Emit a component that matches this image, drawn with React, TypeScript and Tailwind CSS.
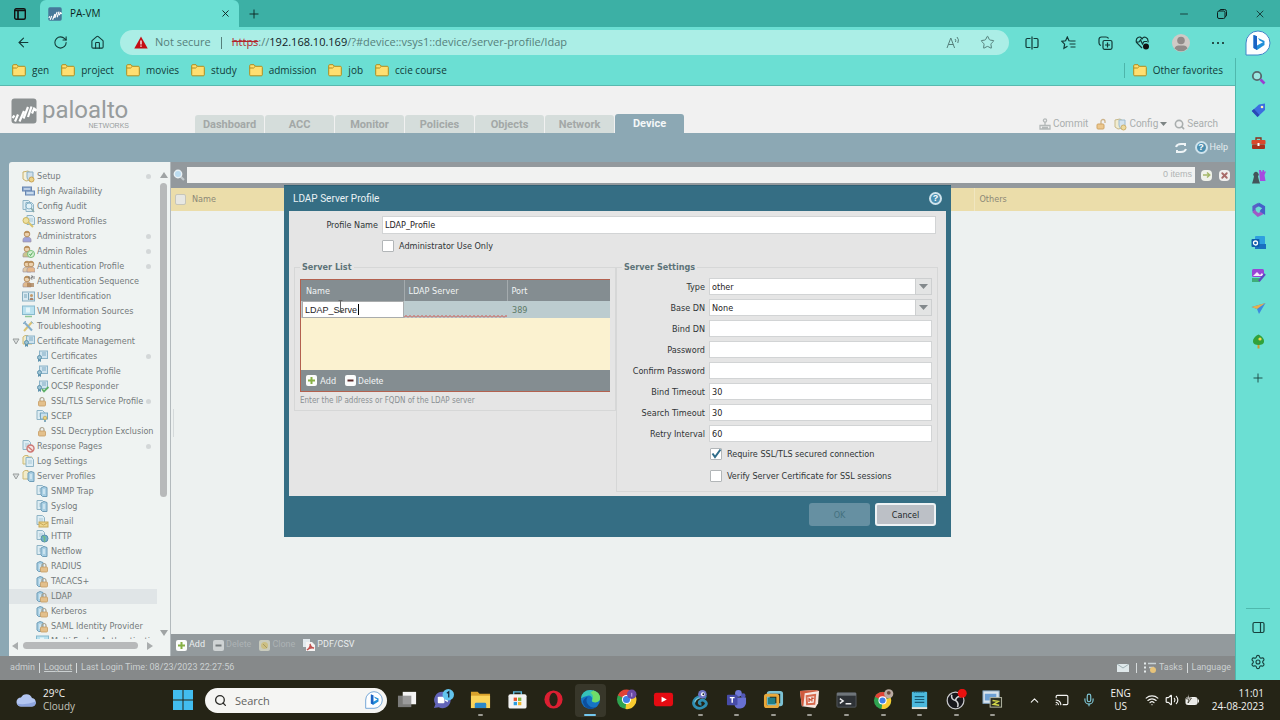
import React from 'react';
import {
  ArrowLeft,
  Columns2,
  Cast,
  ChevronUp,
  Home,
  Mic,
  Minus,
  Plus,
  RotateCw,
  Search,
  Settings,
  Star,
  Volume2,
  Wifi,
  X,
} from 'lucide-react';
import { clsx } from 'clsx';
import { twMerge } from 'tailwind-merge';

function cn(...inputs: (string | undefined | null | false)[]) {
  return twMerge(clsx(inputs));
}

const UI = "font-['Open_Sans','Noto_Sans',sans-serif]";
const NARROW = "font-['Roboto',sans-serif]";
const FORM = "font-['DejaVu_Sans_Condensed','Open_Sans',sans-serif]";

type TreeIconName =
  | 'setup'
  | 'ha'
  | 'audit'
  | 'key'
  | 'user'
  | 'role'
  | 'users'
  | 'sequence'
  | 'idcard'
  | 'vm'
  | 'tools'
  | 'certFolder'
  | 'cert'
  | 'certOk'
  | 'lock'
  | 'scep'
  | 'blocked'
  | 'logs'
  | 'serverFolder'
  | 'server'
  | 'mail'
  | 'http'
  | 'serverLock';

interface TreeItem {
  label: string;
  icon: TreeIconName;
  child?: boolean;
  open?: boolean;
  dot?: boolean;
  selected?: boolean;
}

const TREE: TreeItem[] = [
  { label: 'Setup', icon: 'setup', dot: true },
  { label: 'High Availability', icon: 'ha' },
  { label: 'Config Audit', icon: 'audit' },
  { label: 'Password Profiles', icon: 'key' },
  { label: 'Administrators', icon: 'user', dot: true },
  { label: 'Admin Roles', icon: 'role', dot: true },
  { label: 'Authentication Profile', icon: 'users', dot: true },
  { label: 'Authentication Sequence', icon: 'sequence' },
  { label: 'User Identification', icon: 'idcard' },
  { label: 'VM Information Sources', icon: 'vm' },
  { label: 'Troubleshooting', icon: 'tools' },
  { label: 'Certificate Management', icon: 'certFolder', open: true },
  { label: 'Certificates', icon: 'cert', child: true, dot: true },
  { label: 'Certificate Profile', icon: 'cert', child: true },
  { label: 'OCSP Responder', icon: 'certOk', child: true },
  { label: 'SSL/TLS Service Profile', icon: 'lock', child: true, dot: true },
  { label: 'SCEP', icon: 'scep', child: true },
  { label: 'SSL Decryption Exclusion', icon: 'lock', child: true },
  { label: 'Response Pages', icon: 'blocked', dot: true },
  { label: 'Log Settings', icon: 'logs' },
  { label: 'Server Profiles', icon: 'serverFolder', open: true },
  { label: 'SNMP Trap', icon: 'server', child: true },
  { label: 'Syslog', icon: 'server', child: true },
  { label: 'Email', icon: 'mail', child: true },
  { label: 'HTTP', icon: 'http', child: true },
  { label: 'Netflow', icon: 'server', child: true },
  { label: 'RADIUS', icon: 'serverLock', child: true },
  { label: 'TACACS+', icon: 'serverLock', child: true },
  { label: 'LDAP', icon: 'serverLock', child: true, selected: true },
  { label: 'Kerberos', icon: 'serverLock', child: true },
  { label: 'SAML Identity Provider', icon: 'serverLock', child: true },
  { label: 'Multi Factor Authentication', icon: 'vm', child: true },
];

const Page = ({ x = 0, y = 0 }: { x?: number; y?: number }) => (
  <g transform={`translate(${x} ${y})`}>
    <path d="M1 .5h5.500l2 2v7h-7.500z" fill="#dcecf3" stroke="#8fb4c6" />
    <path d="M3 4h4M3 6h4" stroke="#a9c8d6" />
  </g>
);
const Folder = () => <path d="M1 9V2l2-1.500h3V2h4v7z" fill="#f2ecc9" stroke="#cdb977" />;
const Rack = ({ x = 0 }: { x?: number }) => (
  <g transform={`translate(${x} 0)`}>
    <path d="M1 3l3-1.500 3 1v9H2.500L1 10z" fill="#a9cfe3" stroke="#6e9db8" />
    <path d="M4 4v5" stroke="#eef7fb" />
  </g>
);
const Padlock = ({ x = 0, y = 0 }: { x?: number; y?: number }) => (
  <g transform={`translate(${x} ${y})`}>
    <path d="M2 4V2.500a2 2 0 0 1 4 0V4" fill="none" stroke="#aaa18d" strokeWidth="1.200" />
    <rect x="0.500" y="4" width="7" height="5" rx="1" fill="#e3c08c" stroke="#c79c62" strokeWidth=".8" />
  </g>
);
const Person = ({ x = 0, body = '#9fa3da' }: { x?: number; body?: string }) => (
  <g transform={`translate(${x} 0)`}>
    <path d="M1 12c-.5-4 1-5 4-5s4.500 1 4 5z" fill={body} stroke="#9a8f9c" strokeWidth=".6" />
    <circle cx="5" cy="4" r="2.800" fill="#ecd1ad" stroke="#b99161" />
    <path d="M2.500 3.500C3 .5 7 .5 7.500 3.500 6 2.500 4 2.500 2.500 3.500z" fill="#b58a55" />
  </g>
);
const Ribbon = ({ x = 0 }: { x?: number }) => (
  <g transform={`translate(${x} 0)`}>
    <rect x="3.500" y="1" width="8" height="7.500" fill="#cfe3ee" stroke="#8bb3c8" />
    <path d="M6 3h4M6 5h4" stroke="#7fabc3" />
    <path d="M2 8v4l1.500-1L5 12V8z" fill="#5f93ad" />
    <circle cx="3.500" cy="7.500" r="2" fill="#9cc3d4" stroke="#5f93ad" />
  </g>
);

function TreeIcon({ name }: { name: TreeIconName }) {
  const art: Record<TreeIconName, React.ReactNode> = {
    setup: (
      <>
        <path d="M1 2l5-1 3 2v7l-5 1-3-2z" fill="#f4f1dc" stroke="#c7b06b" />
        <path d="M5 2h6v5c0 3-3 4-3 4s-3-1-3-4z" fill="#cfe0ec" stroke="#8aaec4" />
        <circle cx="9.500" cy="9.500" r="2.500" fill="#ecd387" stroke="#c9a354" />
      </>
    ),
    ha: (
      <>
        <rect x="0.500" y="2" width="9" height="4" fill="#8fabd0" stroke="#6886b1" />
        <rect x="3.500" y="6" width="9" height="4" fill="#a9c4e0" stroke="#6886b1" />
        <path d="M2 4h6M5 8h6" stroke="#e7f0f8" />
      </>
    ),
    audit: (
      <>
        <Page />
        <Page x={3} y={2} />
        <circle cx="7" cy="6" r="3" fill="#e3f2f8" stroke="#88b5cb" />
        <path d="M9 8l3 4" stroke="#8aa" strokeWidth="1.500" />
      </>
    ),
    key: (
      <>
        <Page x={4} />
        <circle cx="4" cy="5.500" r="3" fill="#eee0a0" stroke="#ccb65e" />
        <path d="M6 7l5 5" stroke="#d8c46f" strokeWidth="2" />
      </>
    ),
    user: <Person />,
    role: (
      <>
        <Person body="#c9c48e" />
        <circle cx="9" cy="9" r="3.500" fill="#d5f0d3" stroke="#76bf7a" />
        <path d="M7.500 9l1 1.500 2-3" fill="none" stroke="#4fa557" />
      </>
    ),
    users: (
      <>
        <Person body="#e0caa8" />
        <Person x={4} body="#e6b98c" />
      </>
    ),
    sequence: (
      <>
        <Person body="#e0b98c" />
        <path d="M5 9h7M5 11h7" stroke="#a98055" strokeWidth="1.500" />
        <path d="M7 1v3M9 1h1.500v1.500H9V4h1.500M12 1v3" fill="none" stroke="#777" strokeWidth=".9" />
      </>
    ),
    idcard: (
      <>
        <rect x="0.500" y="2" width="12" height="9" fill="#d8e9f1" stroke="#88aec0" />
        <path d="M2 5h3M2 7h3M6.500 3v7" stroke="#79a5ba" />
        <circle cx="9.500" cy="5.500" r="1.500" fill="#c49a6a" />
        <path d="M7.500 10c0-3 4-3 4 0z" fill="#a8826a" />
      </>
    ),
    vm: (
      <>
        <rect x="0.500" y="1" width="12" height="8.500" fill="#b9e1ef" stroke="#87b9cd" />
        <rect x="4" y="2.500" width="4" height="5" fill="#e4f5fa" />
        <path d="M3 11.500h7" stroke="#8fc796" strokeWidth="1.500" />
      </>
    ),
    tools: (
      <>
        <path d="M2 11l8-9" stroke="#dcc475" strokeWidth="2" />
        <path d="M2 2l8 8.500" stroke="#86aeca" strokeWidth="2" />
        <path d="M9 1.500l2.500 2M1 4l3-3" stroke="#86aeca" />
      </>
    ),
    certFolder: (
      <>
        <Folder />
        <Ribbon x={1} />
      </>
    ),
    cert: <Ribbon />,
    certOk: (
      <>
        <Ribbon />
        <path d="M6 9l2 2.500L12.500 7" fill="none" stroke="#5fb067" strokeWidth="1.800" />
      </>
    ),
    lock: (
      <g transform="translate(2 2)">
        <Padlock />
      </g>
    ),
    scep: (
      <>
        <Page />
        <rect x="4.500" y="3" width="7" height="6" fill="#c9e1ee" stroke="#79a9c1" />
        <circle cx="9" cy="8" r="1.800" fill="#e8d382" stroke="#bfa350" strokeWidth=".7" />
        <path d="M9 10v2" stroke="#5f93ad" strokeWidth="1.500" />
      </>
    ),
    blocked: (
      <>
        <Page />
        <circle cx="8.500" cy="8.500" r="3.500" fill="#f3e4e2" stroke="#cf7773" strokeWidth="1.400" />
        <path d="M6 6.500l5 4.500" stroke="#cf7773" strokeWidth="1.300" />
      </>
    ),
    logs: (
      <>
        <Folder />
        <Page x={3} y={2} />
      </>
    ),
    serverFolder: (
      <>
        <Folder />
        <Rack x={5} />
      </>
    ),
    server: (
      <>
        <Page />
        <Rack x={4} />
      </>
    ),
    mail: (
      <>
        <Page />
        <rect x="3" y="7" width="9" height="5" fill="#ecd58d" stroke="#caa957" />
        <path d="M3 7.500l4.500 2.500L12 7.500" fill="none" stroke="#caa957" />
      </>
    ),
    http: (
      <>
        <Page />
        <circle cx="8.500" cy="8.500" r="3.500" fill="#74aec9" stroke="#5690ac" />
        <path d="M6.500 7c2-1 3 1 2 2s1 2 0 2.500" fill="none" stroke="#6fbf7d" strokeWidth="1.300" />
      </>
    ),
    serverLock: (
      <>
        <Rack />
        <Padlock x={4} y={3} />
      </>
    ),
  };
  return (
    <svg viewBox="0 0 13 13" className="size-[13px] shrink-0" aria-hidden>
      {art[name]}
    </svg>
  );
}

function FavFolder() {
  return (
    <svg viewBox="0 0 14 13" className="h-[13px] w-[14px] shrink-0" aria-hidden>
      <path d="M.7 3V1.700q0-1 1-1H5l1.300 1.600h6q1 0 1 1v7.500q0 1-1 1h-10.600q-1 0-1-1z" fill="#ffdf70" stroke="#b18d1f" />
      <path d="M.7 4h3.800L6.300 2.300" fill="none" stroke="#b18d1f" />
    </svg>
  );
}

function PaloMark({ className, bg }: { className: string; bg: string }) {
  return (
    <svg viewBox="0 0 26 26" className={className} aria-hidden>
      <rect x="0.500" y="0.500" width="25" height="25" rx="3" fill={bg} />
      <path d="M1.500 20l2-2.500M4 23.500l3-7M8.500 23.500l4.500-10.500M12.500 20.500l4.500-11.500M17 19l3.500-10.500M21 15.500l2.500-6M24 13l1.500-2" stroke="#fff" strokeWidth="2.200" />
    </svg>
  );
}

function BingMark({ className }: { className: string }) {
  return (
    <svg viewBox="0 0 26 26" className={className} aria-hidden>
      <path d="M13 1a12 12 0 1 1 0 24H1V13A12 12 0 0 1 13 1z" fill="#fdfeff" stroke="#3f86c9" />
      <path d="M8.500 5l3.500 1.300v9.200l6-3.300-3.500-1.600L13 8l6.500 3v4L12 20l-3.500-2z" fill="#208fd9" />
      <path d="M8.500 5l3.500 1.300V20l-3.500-2z" fill="#1b62c4" />
    </svg>
  );
}

function BrowserTitle() {
  return (
    <div className="flex h-[27px] shrink-0 bg-[#3cb0a5] text-[#0c1f1d]">
      <div className="flex w-10 items-center justify-center">
        <svg viewBox="0 0 12 12" className="size-3" aria-hidden>
          <rect x="0.700" y="0.700" width="10.600" height="10.600" rx="1.500" fill="none" stroke="#111" strokeWidth="1.400" />
          <path d="M1 2.500h10M4 2v9" stroke="#111" strokeWidth="1.600" />
        </svg>
      </div>
      <div className="flex w-[199px] items-center rounded-t-md bg-[#6bdfd3] pl-2">
        <PaloMark className="size-[14px]" bg="#46799a" />
        <span className="flex-1 pl-2 text-[10px]">PA-VM</span>
        <button aria-label="Close tab" className="mr-2">
          <X className="size-[11px]" strokeWidth={2} />
        </button>
      </div>
      <button aria-label="New tab" className="px-2">
        <Plus className="size-[14px]" strokeWidth={1.5} />
      </button>
      <div className="ml-auto flex items-center gap-[27px] pr-[14px]">
        <button aria-label="Minimize">
          <Minus className="size-3" strokeWidth={1.5} />
        </button>
        <button aria-label="Restore">
          <svg viewBox="0 0 10 10" className="size-[10px]" fill="none" stroke="currentColor" aria-hidden>
            <rect x="0.500" y="2" width="7.500" height="7.500" rx="1.500" />
            <path d="M2.500 2q0-1.500 1.500-1.500h3.500q2 0 2 2V6q0 1.500-1.500 1.500" />
          </svg>
        </button>
        <button aria-label="Close">
          <X className="size-3" strokeWidth={1.5} />
        </button>
      </div>
    </div>
  );
}

function Toolbar() {
  return (
    <div className="flex h-[31px] shrink-0 items-center text-[#123a37]">
      <div className="flex w-[120px] items-center gap-[22px] pl-4">
        <button aria-label="Back">
          <ArrowLeft className="size-[15px]" strokeWidth={1.7} />
        </button>
        <button aria-label="Refresh">
          <RotateCw className="size-[15px]" strokeWidth={1.7} />
        </button>
        <button aria-label="Home">
          <Home className="size-[15px]" strokeWidth={1.7} />
        </button>
      </div>
      <div className="flex h-[25px] flex-1 items-center rounded-full bg-[#abeee6] pl-[14px] pr-[14px] text-[11px] text-[#55807b]">
        <svg viewBox="0 0 14 13" className="h-[13px] w-[14px]" aria-hidden>
          <path d="M7 .5L13.700 12.500H.3z" fill="#c40d14" />
          <path d="M7 4.500v4M7 9.500v1.300" stroke="#fff" strokeWidth="1.300" />
        </svg>
        <span className="pl-[7px]">Not secure</span>
        <span className="mx-[10px] h-3 w-px bg-[#55807b]" />
        <div role="textbox" aria-label="Address" className="flex-1 whitespace-nowrap">
          <span className="text-[#b3262c] line-through">https</span>://
          <span className="text-[#10201f]">192.168.10.169</span>
          /?#device::vsys1::device/server-profile/ldap
        </div>
        <button aria-label="Read aloud" className="mr-5">
          <svg viewBox="0 0 14 13" className="h-[13px] w-[14px]" fill="none" stroke="currentColor" aria-hidden>
            <path d="M1 12L4.800 2 8.600 12M2.300 8.500h5M9 3q1.300 1 .5 3M11 1q2.500 2.500.8 6" />
          </svg>
        </button>
        <button aria-label="Add to favorites">
          <Star className="size-[15px]" strokeWidth={1.6} />
        </button>
      </div>
      <div className="flex items-center gap-[22px] pl-4 pr-[11px]">
        <button aria-label="Split screen">
          <svg viewBox="0 0 14 14" className="size-[14px]" fill="none" stroke="currentColor" strokeWidth="1.200" aria-hidden>
            <path d="M5.500 11.500H2.300Q1 11.500 1 10.200V3.800Q1 2.500 2.300 2.500h3.200M8.500 2.500h3.200q1.300 0 1.300 1.300v6.400q0 1.300-1.300 1.300H8.500M7 .5v13" />
          </svg>
        </button>
        <button aria-label="Favorites">
          <svg viewBox="0 0 15 14" className="h-[14px] w-[15px]" fill="none" stroke="currentColor" strokeWidth="1.200" aria-hidden>
            <path d="M10 5L8 4.800 6.300 1 4.600 4.800.8 5.300l2.800 2.800-.7 4.200 3.600-2M9.500 5h5M8.500 8h6M9.500 11h5" />
          </svg>
        </button>
        <button aria-label="Collections">
          <svg viewBox="0 0 15 14" className="h-[14px] w-[15px]" fill="none" stroke="currentColor" strokeWidth="1.200" aria-hidden>
            <rect x="5" y="4.500" width="9" height="8.800" rx="1.500" />
            <path d="M9.500 6.500v5M7 9h5M3 9.500Q1 9 1 7V3.500Q1 1 3.500 1H8q2 0 2.500 1.500" />
          </svg>
        </button>
        <button aria-label="Browser essentials">
          <svg viewBox="0 0 15 14" className="h-[14px] w-[15px]" fill="none" stroke="currentColor" strokeWidth="1.200" aria-hidden>
            <path d="M7 12L1.500 6.500Q.5 3 3 1.500T7 3q1.500-2.500 4-1.500T13 6.500M1 6h3l1.500-2 2 4L9 5.500h3" />
            <circle cx="11" cy="10.500" r="3" fill="#111" stroke="none" />
          </svg>
        </button>
        <button aria-label="Profile">
          <svg viewBox="0 0 18 18" className="size-[18px]" aria-hidden>
            <circle cx="9" cy="9" r="9" fill="#cfcac6" />
            <circle cx="9" cy="6.500" r="3.800" fill="#918b89" />
            <path d="M2.500 14.500q1-3 4-3h5q3 0 4 3A9 9 0 0 1 2.500 14.500z" fill="#918b89" />
          </svg>
        </button>
        <button aria-label="More" className="flex gap-[3px]">
          <span className="size-[2px] rounded-full bg-[#0c1f1d]" />
          <span className="size-[2px] rounded-full bg-[#0c1f1d]" />
          <span className="size-[2px] rounded-full bg-[#0c1f1d]" />
        </button>
      </div>
    </div>
  );
}

function Favorites() {
  return (
    <nav className="flex h-7 shrink-0 items-center gap-3 border-b border-[#59b9af] px-3 pb-[2px] text-[10px] text-[#123a37]">
      {['gen', 'project', 'movies', 'study', 'admission', 'job', 'ccie course'].map((name) => (
        <a key={name} href="#" className="flex items-center gap-[6px]">
          <FavFolder />
          {name}
        </a>
      ))}
      <a href="#" className="ml-auto flex items-center gap-[6px] border-l border-[#4db5aa] pl-2">
        <FavFolder />
        Other favorites
      </a>
    </nav>
  );
}

function EdgeSidebar() {
  return (
    <aside className="flex w-[45px] shrink-0 flex-col items-center bg-[#6bdfd3] pt-[3px] text-[#17413d]">
      <BingMark className="size-[26px]" />
      <div className="mt-[2px] flex w-full flex-1 flex-col items-center border-l border-[#4fb8ad] pt-3">
        <div className="flex flex-col items-center gap-[18px]">
          <svg viewBox="0 0 15 15" className="size-[15px]" aria-hidden>
            <circle cx="6" cy="6" r="4.200" fill="#9ce8e2" stroke="#55696d" strokeWidth="1.800" />
            <path d="M9.500 9.500l4 4" stroke="#9a3fd1" strokeWidth="2.600" />
          </svg>
          <svg viewBox="0 0 15 15" className="size-[15px]" aria-hidden>
            <path d="M8 1.500l6-1V7L6.500 14 .8 8z" fill="#3c6ee0" />
            <path d="M.8 8l5.700 6 2-2L3 6z" fill="#2949b5" />
            <circle cx="11" cy="4" r="1.300" fill="#fff3b0" />
          </svg>
          <svg viewBox="0 0 15 15" className="size-[15px]" aria-hidden>
            <path d="M5 4V2h5v2" fill="none" stroke="#8d2b18" strokeWidth="1.300" />
            <rect x="0.500" y="4" width="14" height="4.500" rx="1" fill="#d8492c" />
            <rect x="1" y="8.500" width="13" height="4.500" rx="1" fill="#a8321c" />
            <rect x="6.500" y="7" width="2" height="3" fill="#fff" />
          </svg>
          <svg viewBox="0 0 15 15" className="size-[15px]" aria-hidden>
            <path d="M8 1h2v1.500h1.500V1H13v1.500h2L13.500 6l1 6H9z" fill="#a64be0" />
            <path d="M1 14.500l1-3 1-4a2.700 2.700 0 1 1 4 0l1 4 1 3z" fill="#43545a" />
          </svg>
          <svg viewBox="0 0 15 15" className="size-[15px]" fill="none" strokeWidth="3.200" aria-hidden>
            <path d="M7.500 2.500L3 5v4.500" stroke="#5a5fc6" />
            <path d="M2.500 9l4.500 4 5-2.500" stroke="#a05ac6" />
            <path d="M7 2l5.500 3.200V10L9.500 8" stroke="#4560c9" />
          </svg>
          <svg viewBox="0 0 15 15" className="size-[15px]" aria-hidden>
            <rect x="4" y="1" width="10" height="13" rx="1" fill="#2f9fdf" />
            <path d="M4 9h11v5H4z" fill="#1a6fc0" />
            <rect x="0.500" y="4" width="8" height="8" rx="1" fill="#0d5cab" />
            <circle cx="4.500" cy="8" r="2" fill="none" stroke="#fff" strokeWidth="1.300" />
          </svg>
          <svg viewBox="0 0 15 15" className="size-[15px]" aria-hidden>
            <rect x="1" y="1" width="12" height="8" rx="1.500" fill="#9a45d6" />
            <path d="M2 8l4-4 3 3 2-2 2 3z" fill="#f6eafc" />
            <path d="M1 10h8v4H1z" fill="#3fae79" />
            <path d="M8 13l6-7" stroke="#5d46c4" strokeWidth="2.200" />
          </svg>
          <svg viewBox="0 0 15 15" className="size-[15px]" aria-hidden>
            <path d="M.5 6L14.500 2 8 13 6 8z" fill="#3c8be0" />
            <path d="M.5 6L14.500 2 6 8z" fill="#e6b04c" />
          </svg>
          <svg viewBox="0 0 15 15" className="size-[15px]" aria-hidden>
            <path d="M6.500 10h2v4.500h-2z" fill="#d29b2b" />
            <path d="M7.500 .5q6 3 5.500 7.500-.5 3-5.500 3T2 8Q1.500 3.500 7.500.5z" fill="#31a23a" />
            <circle cx="9" cy="5" r="1.600" fill="#f3d64d" />
          </svg>
          <button aria-label="Customize" className="mt-1">
            <Plus className="size-[14px]" strokeWidth={1.5} />
          </button>
        </div>
        <div className="mt-auto flex flex-col items-center gap-5 border-t border-[#4fb8ad] px-1 pb-[10px] pt-3">
          <svg viewBox="0 0 13 13" className="size-[13px]" fill="none" stroke="currentColor" strokeWidth="1.200" aria-hidden>
            <rect x="1" y="1.500" width="11" height="10" rx="1.500" />
            <path d="M8.500 2v9" />
          </svg>
          <button aria-label="Settings">
            <Settings className="size-[16px]" strokeWidth={1.7} />
          </button>
        </div>
      </div>
    </aside>
  );
}

const TABS = ['Dashboard', 'ACC', 'Monitor', 'Policies', 'Objects', 'Network', 'Device'];

function AppHeader() {
  return (
    <header className="flex h-[47px] shrink-0 bg-[#f1f1f1]">
      <div className="flex w-[195px] pl-[11px] pt-3">
        <PaloMark className="size-[26px]" bg="#8b9091" />
        <div className="w-[92px] pl-[5px] text-[#979c9d]">
          <div className="font-['Roboto',sans-serif] text-[24px] leading-[24px]">paloalto</div>
          <div className="text-right font-['Liberation_Sans',sans-serif] text-[7px] leading-[7px]">NETWORKS</div>
        </div>
      </div>
      <div className={cn('flex items-end gap-px text-[11px] font-bold leading-5', NARROW)}>
        {TABS.map((tab) => (
          <button
            key={tab}
            className={cn(
              'h-[18px] w-[69px] rounded-t-[3px] text-center',
              tab === 'Device' ? 'h-[19px] bg-[#8ca8b4] text-[#f4f7f8]' : 'bg-[#d5dddb] text-[#a3a8a7]'
            )}
          >
            {tab}
          </button>
        ))}
      </div>
      <div className={cn('ml-auto flex items-end gap-[7px] pb-px pr-[17px] text-[10px] leading-4 text-[#a9aeae]', NARROW)}>
        <button className="flex items-center gap-[2px]">
          <svg viewBox="0 0 12 12" className="size-3" fill="none" stroke="#b4b9b9" strokeWidth="1.300" aria-hidden>
            <circle cx="6" cy="2.500" r="1.600" />
            <path d="M6 4v3M1 7.500h10v3.500H1zM3 9.500h6" />
          </svg>
          Commit
        </button>
        <svg viewBox="0 0 12 12" className="mb-[2px] size-3" aria-hidden>
          <path d="M6 6V3.500a2 2 0 0 1 4 0V5" fill="none" stroke="#cdb48c" strokeWidth="1.300" />
          <rect x="2" y="6" width="7" height="5" rx="1" fill="#ecc78d" stroke="#d0a566" />
        </svg>
        <button className="flex items-center gap-[2px]">
          <svg viewBox="0 0 13 13" className="size-[13px]" aria-hidden>
            <path d="M1 2l5-1 3 2v7l-5 1-3-2z" fill="#f1ecd0" stroke="#c7b98a" />
            <path d="M5 2h6v5c0 3-3 4-3 4s-3-1-3-4z" fill="#d3e3ee" stroke="#9bbacd" />
            <circle cx="9.500" cy="9.500" r="2.500" fill="#ecd99c" stroke="#cdb06b" />
          </svg>
          Config
          <svg viewBox="0 0 7 4" className="h-1 w-[7px]" aria-hidden>
            <path d="M0 0h7L3.500 4z" fill="#7d8484" />
          </svg>
        </button>
        <button className="flex items-center gap-[2px]">
          <Search className="size-[11px]" strokeWidth={3.5} />
          Search
        </button>
      </div>
    </header>
  );
}

function TreePanel() {
  return (
    <aside className="flex w-[161px] shrink-0 flex-col rounded-tl-[3px] bg-[#eff3f2]">
      <div className="flex min-h-0 flex-1">
        <ul className={cn('mt-[7px] min-h-0 w-[148px] overflow-hidden text-[9px] leading-[15px] text-[#747a7b]', FORM)}>
          {TREE.map((item) => (
            <li key={item.label} className={cn('flex h-[15px] items-center', item.selected && 'bg-[#e0e5e7]')}>
              <span className={cn('flex shrink-0 items-center pl-[3px]', item.child ? 'w-[27px]' : 'w-[13px]')}>
                {item.open && (
                  <svg viewBox="0 0 8 7" className="h-[7px] w-2" aria-hidden>
                    <path d="M1 1h6L4 6z" fill="#d9dddd" stroke="#9a9f9f" />
                  </svg>
                )}
              </span>
              <TreeIcon name={item.icon} />
              <a href="#" className="min-w-0 flex-1 overflow-hidden whitespace-nowrap pl-[2px]">
                {item.label}
              </a>
              {item.dot && <span className="ml-px mr-[6px] size-[5px] shrink-0 rounded-full bg-[#d3d7d8]" />}
            </li>
          ))}
        </ul>
        <div className="flex w-[13px] flex-col items-center gap-[5px] pb-[3px] pt-[10px]">
          <svg viewBox="0 0 8 6" className="h-[6px] w-2" aria-hidden>
            <path d="M4 0l4 6H0z" fill="#9fa3a4" />
          </svg>
          <div className="flex w-[7px] flex-1 flex-col">
            <div className="h-[71%] rounded-full bg-[#b7b9ba]" />
          </div>
          <svg viewBox="0 0 8 6" className="h-[6px] w-2" aria-hidden>
            <path d="M4 6l4-6H0z" fill="#9fa3a4" />
          </svg>
        </div>
      </div>
      <div className="flex h-[17px] items-center gap-[5px] pb-1 pl-[3px]">
        <svg viewBox="0 0 6 8" className="h-2 w-[6px]" aria-hidden>
          <path d="M0 4l6-4v8z" fill="#a9adae" />
        </svg>
        <div className="h-[7px] w-[115px] rounded-full bg-[#b7b9ba]" />
        <svg viewBox="0 0 6 8" className="ml-1 h-2 w-[6px]" aria-hidden>
          <path d="M6 4L0 0v8z" fill="#a9adae" />
        </svg>
      </div>
    </aside>
  );
}

function PlusBadge({ minus, faded }: { minus?: boolean; faded?: boolean }) {
  return (
    <svg viewBox="0 0 11 11" className="size-[11px] shrink-0" aria-hidden>
      <rect width="11" height="11" rx="2" fill={faded ? '#cfd3d4' : '#fbfcfb'} />
      {minus ? (
        <path d="M2.500 5.500h6" stroke={faded ? '#747a7d' : '#5a2a2a'} strokeWidth="2" />
      ) : (
        <path d="M2 5.500h7M5.500 2v7" stroke="#86b045" strokeWidth="2" />
      )}
    </svg>
  );
}

function MainPane() {
  return (
    <main className="flex min-w-0 flex-1 flex-col border-l border-[#b3babd] bg-[#edf1f0]">
      <div className="flex h-[26px] shrink-0 items-center bg-[#93999d] pl-[2px] pr-1">
        <svg viewBox="0 0 12 12" className="size-3" aria-hidden>
          <path d="M7.500 7.500l3.500 3.500" stroke="#c3cacd" strokeWidth="2.200" />
          <circle cx="5" cy="5" r="3.700" fill="#bcdcf0" stroke="#e9f1f5" strokeWidth="1.400" />
        </svg>
        <div className="ml-[2px] flex h-4 flex-1 items-center bg-[#f1f2f1] pr-[3px] font-['Liberation_Sans',sans-serif] text-[9px] text-[#b0b4b4]">
          <input aria-label="Filter" className="h-full min-w-0 flex-1 bg-transparent outline-none" />
          0 items
        </div>
        <button aria-label="Apply filter" className="ml-[6px] flex size-[11px] items-center justify-center rounded-sm bg-[#f0f2ea]">
          <svg viewBox="0 0 8 8" className="size-2" fill="none" stroke="#a5b868" strokeWidth="1.400" aria-hidden>
            <path d="M0 4h6M4 1.500L6.800 4 4 6.500" />
          </svg>
        </button>
        <button aria-label="Clear filter" className="ml-[7px] mr-px flex size-[11px] items-center justify-center rounded-sm bg-[#f0efee]">
          <X className="size-[9px] text-[#a96b69]" strokeWidth={5} />
        </button>
      </div>
      <table className={cn('w-full table-fixed bg-[#ebddaa] text-left text-[9px] text-[#8c8877]', FORM)}>
        <thead>
          <tr className="h-[23px]">
            <th className="w-[803px] border-r border-[#f0e6c0] p-0 font-normal">
              <label className="flex items-center gap-[6px] pl-1">
                <input type="checkbox" className="size-[11px] appearance-none rounded-[2px] border border-[#c6c5b9] bg-[#e7e7e2]" />
                Name
              </label>
            </th>
            <th className="p-0 pl-[5px] font-normal">Others</th>
          </tr>
        </thead>
      </table>
      <div className="flex flex-1 items-center">
        <span className="h-7 w-[3px] border-r border-[#d5dadb]" />
      </div>
      <div className={cn('flex h-[22px] shrink-0 items-center gap-2 bg-[#939a9d] pl-[5px] text-[9px] text-[#e9edee]', NARROW)}>
        <button className="flex items-center gap-[2px]">
          <PlusBadge />
          Add
        </button>
        <button disabled className="flex items-center gap-[2px] text-[#adb3b5]">
          <PlusBadge minus faded />
          Delete
        </button>
        <button disabled className="flex items-center gap-[2px] text-[#adb3b5]">
          <svg viewBox="0 0 11 11" className="size-[11px]" aria-hidden>
            <rect width="11" height="11" rx="2" fill="#c9cbbd" />
            <circle cx="5.500" cy="5.500" r="3.500" fill="#ccbf83" />
            <path d="M4 4l4 4" stroke="#a79a62" />
          </svg>
          Clone
        </button>
        <button className="flex items-center gap-[2px]">
          <svg viewBox="0 0 12 12" className="size-3" aria-hidden>
            <path d="M0 0h7v8H0z" fill="#e3eaee" />
            <path d="M3 3h6l3 3v6H3z" fill="#f5f3f3" />
            <path d="M4 11q4-3 3-6 1 4 4 4-4-1-7 2z" fill="none" stroke="#c2514f" strokeWidth="1.300" />
          </svg>
          PDF/CSV
        </button>
      </div>
    </main>
  );
}

function AppFooter() {
  return (
    <footer className={cn('flex h-6 shrink-0 items-center bg-[#86898a] pl-[10px] pr-1 text-[9px] text-[#cbd0d1]', NARROW)}>
      <span>admin</span>
      <span className="mx-1 h-[10px] w-px bg-[#d5d9da]" />
      <a href="#" className="underline">
        Logout
      </a>
      <span className="mx-1 h-[10px] w-px bg-[#d5d9da]" />
      <span>Last Login Time: 08/23/2023 22:27:56</span>
      <svg viewBox="0 0 12 8" className="ml-auto h-2 w-3" aria-hidden>
        <path d="M0 0h12v8H0z" fill="#dfe8ea" />
        <path d="M0 0l6 4 6-4" fill="none" stroke="#9fb0b3" />
      </svg>
      <span className="mx-[7px] h-[10px] w-px bg-[#d5d9da]" />
      <svg viewBox="0 0 13 12" className="h-3 w-[13px]" aria-hidden>
        <path d="M0 1.500h3M0 5.500h3M0 9.500h3" stroke="#e3e9ea" strokeWidth="2" strokeDasharray="2 1" />
        <path d="M4 1.500h8M5 5.500h5" stroke="#c9d3d6" strokeWidth="1.500" />
        <circle cx="9" cy="8" r="3" fill="#e6c37a" />
      </svg>
      <a href="#" className="pl-[2px]">
        Tasks
      </a>
      <span className="mx-1 h-[10px] w-px bg-[#d5d9da]" />
      <a href="#">Language</a>
    </footer>
  );
}

const fieldBox = 'h-[17px] w-full min-w-0 border border-[#d2d4d5] bg-white px-[2px] text-[#1f2325] outline-none';

function CheckField({ id, label, checked }: { id: string; label: string; checked?: boolean }) {
  return (
    <label htmlFor={id} className="flex h-[22px] items-center gap-[5px]">
      <span className="relative size-3">
        <input
          id={id}
          type="checkbox"
          defaultChecked={checked}
          className="peer block size-3 appearance-none rounded-[1px] border border-[#b2b6b8] bg-white"
        />
        <svg viewBox="0 0 12 12" className="absolute inset-0 hidden size-3 peer-checked:block" aria-hidden>
          <path d="M2.500 5.500l2.500 3.500L10.500 1.500" fill="none" stroke="#2f6d8a" strokeWidth="2" />
        </svg>
      </span>
      {label}
    </label>
  );
}

const SETTINGS: { id: string; label: string; value: string; type: 'select' | 'text' | 'password' }[] = [
  { id: 'type', label: 'Type', value: 'other', type: 'select' },
  { id: 'base-dn', label: 'Base DN', value: 'None', type: 'select' },
  { id: 'bind-dn', label: 'Bind DN', value: '', type: 'text' },
  { id: 'password', label: 'Password', value: '', type: 'password' },
  { id: 'confirm', label: 'Confirm Password', value: '', type: 'password' },
  { id: 'bind-timeout', label: 'Bind Timeout', value: '30', type: 'text' },
  { id: 'search-timeout', label: 'Search Timeout', value: '30', type: 'text' },
  { id: 'retry', label: 'Retry Interval', value: '60', type: 'text' },
];

function ServerList() {
  return (
    <fieldset className="min-w-0 flex-1 self-start border border-[#d6d7d7] px-[5px] pb-1">
      <legend className="px-[2px] text-[9px] font-bold leading-3 text-[#5d7378]">Server List</legend>
      <div className="mt-[6px] border-y border-l border-[#b3614f]">
        <div className="h-[90px] bg-[#fbf2d0]">
          <table className="w-full table-fixed text-left">
            <thead>
              <tr className="h-[21px] bg-[#848d91] text-[#f1f4f4]">
                <th className="w-[103px] border-r border-[#a4abae] p-0 pl-[5px] font-normal">Name</th>
                <th className="w-[103px] border-r border-[#a4abae] p-0 pl-1 font-normal">LDAP Server</th>
                <th className="p-0 pl-1 font-normal">Port</th>
              </tr>
            </thead>
            <tbody>
              <tr className="h-[17px] bg-[#bccccf] text-[#5c7a67]">
                <td className="relative p-0 pl-px">
                  <input
                    aria-label="Server name"
                    defaultValue="LDAP_Serve"
                    className="block h-[17px] w-full border border-[#a9acad] bg-white px-[2px] font-['Liberation_Sans',sans-serif] text-[9px] text-[#1f2325] outline-none"
                  />
                  {/* text caret and mouse pointer */}
                  <span className="absolute left-[57px] top-[3px] h-[11px] w-px bg-black" />
                  <svg viewBox="0 0 5 12" className="absolute -top-px left-[37px] h-3 w-[5px]" aria-hidden>
                    <path d="M.5.500h4M2.500.500v11M.5 11.500h4" stroke="#666" />
                  </svg>
                </td>
                <td className="p-0 align-bottom">
                  <svg className="block h-[3px] w-full" aria-hidden>
                    <defs>
                      <pattern id="squiggle" width="4" height="3" patternUnits="userSpaceOnUse">
                        <path d="M0 2.500l2-2 2 2" fill="none" stroke="#cf4b42" />
                      </pattern>
                    </defs>
                    <rect width="100%" height="3" fill="url(#squiggle)" />
                  </svg>
                </td>
                <td className="p-0 pl-[5px]">389</td>
              </tr>
            </tbody>
          </table>
        </div>
        <div className={cn('flex h-[21px] items-center gap-[9px] bg-[#848d91] pl-[5px] text-[9px] text-[#eef1f1]', NARROW)}>
          <button className="flex items-center gap-[3px]">
            <PlusBadge />
            Add
          </button>
          <button className="flex items-center gap-[2px]">
            <PlusBadge minus />
            Delete
          </button>
        </div>
      </div>
      <p className="pt-1 text-[8px] leading-[10px] text-[#8a9093]">Enter the IP address or FQDN of the LDAP server</p>
    </fieldset>
  );
}

function ServerSettings() {
  return (
    <fieldset className="min-w-0 flex-1 border border-[#d6d7d7] pb-1 pl-[5px] pr-[5px]">
      <legend className="px-[2px] text-[9px] font-bold leading-3 text-[#5d7378]">Server Settings</legend>
      <div className="grid grid-cols-[83px_1fr] items-center gap-x-1 gap-y-1 pt-[5px]">
        {SETTINGS.map((field) => (
          <React.Fragment key={field.id}>
            <label htmlFor={field.id} className="whitespace-nowrap text-right">
              {field.label}
            </label>
            {field.type === 'select' ? (
              <span className="relative flex">
                <select id={field.id} className={cn(fieldBox, 'appearance-none')}>
                  <option>{field.value}</option>
                </select>
                <span className="pointer-events-none absolute inset-y-0 right-0 flex w-[17px] items-center justify-center border border-[#cdcfd0] bg-[#e3e4e4]">
                  <svg viewBox="0 0 9 5" className="h-[5px] w-[9px]" aria-hidden>
                    <path d="M0 0h9L4.500 5z" fill="#83898c" />
                  </svg>
                </span>
              </span>
            ) : (
              <input id={field.id} type={field.type} defaultValue={field.value} className={fieldBox} />
            )}
          </React.Fragment>
        ))}
      </div>
      <div className="pl-[88px] pt-px">
        <CheckField id="require-ssl" label="Require SSL/TLS secured connection" checked />
        <CheckField id="verify-cert" label="Verify Server Certificate for SSL sessions" />
      </div>
    </fieldset>
  );
}

function ProfileDialog() {
  return (
    <section
      role="dialog"
      aria-label="LDAP Server Profile"
      className={cn('w-[667px] border-t border-[#2d5f74] bg-[#356e84] px-[5px] text-[9px] leading-3 text-[#2f3436]', FORM)}
    >
      <div className={cn('flex h-[25px] items-center pl-1 pr-1 text-[10px] text-[#eaf2f5]', NARROW)}>
        <h2 className="flex-1">LDAP Server Profile</h2>
        <HelpBadge />
      </div>
      <form className="bg-[#e5e5e5] px-[5px] pb-1 pt-[5px]" onSubmit={(e) => e.preventDefault()}>
        <div className="flex items-center gap-1 pr-[5px]">
          <label htmlFor="profile-name" className="w-[84px] text-right">
            Profile Name
          </label>
          <input id="profile-name" defaultValue="LDAP_Profile" className={cn(fieldBox, 'h-[18px] flex-1')} />
        </div>
        <div className="pl-[88px] pt-px">
          <CheckField id="admin-only" label="Administrator Use Only" />
        </div>
        <div className="flex pr-[3px] pt-1">
          <ServerList />
          <ServerSettings />
        </div>
      </form>
      <div className="flex h-[41px] items-start justify-end gap-[5px] pr-[10px] pt-[7px]">
        <button disabled className="h-[23px] w-[61px] rounded-[3px] bg-[#6690a2] text-[#44707f]">
          OK
        </button>
        <button className="h-[23px] w-[61px] rounded-[3px] border-2 border-[#eef2f4] bg-[#bcc0c6] text-[#22282b]">Cancel</button>
      </div>
    </section>
  );
}

function HelpBadge() {
  return (
    <span className="flex size-[13px] items-center justify-center rounded-full border-2 border-[#cfe3ec] bg-[#4b8fb0] font-['Liberation_Sans',sans-serif] text-[9px] font-bold leading-none text-white">
      ?
    </span>
  );
}

// artwork for the pinned apps, drawn in a 22x22 box
const APPS: { name: string; running?: boolean; active?: boolean; art: React.ReactNode }[] = [
  {
    name: 'Task view',
    art: (
      <>
        <rect x="6" y="3" width="14" height="13" fill="#f4f4f4" />
        <rect x="1" y="7" width="14" height="12" fill="#8b8b8b" opacity=".85" />
      </>
    ),
  },
  {
    name: 'Chat',
    art: (
      <>
        <path d="M10 3a8.500 8.500 0 1 1-4 16l-5 1 1.500-4A8.500 8.500 0 0 1 10 3z" fill="#6264b8" />
        <rect x="5" y="8" width="7" height="7" rx="1" fill="#fff" />
        <path d="M12.500 11l3-2v5l-3-2z" fill="#fff" />
        <circle cx="16" cy="6" r="6" fill="#63c5ee" />
        <path d="M14.500 4.500L16.500 3v6" fill="none" stroke="#123" strokeWidth="1.300" />
      </>
    ),
  },
  {
    name: 'File Explorer',
    running: true,
    art: (
      <>
        <path d="M1 3h7l2 2h11v15H1z" fill="#d9a22c" />
        <path d="M1 7h20v13H1z" fill="#fbd45b" />
        <path d="M5 20v-4q0-1.500 1.500-1.500h9q1.500 0 1.500 1.500v4z" fill="#2b88c9" />
      </>
    ),
  },
  {
    name: 'Store',
    art: (
      <>
        <path d="M7 6V3h8v3" fill="none" stroke="#59b6dc" strokeWidth="1.500" />
        <rect x="1.500" y="5.500" width="19" height="15" rx="2" fill="#f3f3f3" />
        <path d="M7 9h3.500v3.500H7z" fill="#e5502c" />
        <path d="M11.500 9H15v3.500h-3.500z" fill="#7eb63a" />
        <path d="M7 13.500h3.500V17H7z" fill="#2c9de0" />
        <path d="M11.500 13.500H15V17h-3.500z" fill="#f2b72c" />
      </>
    ),
  },
  {
    name: 'Opera',
    art: (
      <>
        <circle cx="11" cy="11" r="9.500" fill="#dc1f32" />
        <ellipse cx="11" cy="11" rx="4.300" ry="7" fill="#262316" />
      </>
    ),
  },
  {
    name: 'Edge',
    running: true,
    active: true,
    art: (
      <>
        <circle cx="11" cy="11" r="10" fill="#1673c4" />
        <path d="M1 10Q2 1 11 1q9 .5 10 8 0 5-6 5-4-.5-2-3.500Q12 6 8 7q-5 1-7 3z" fill="#35c3b8" />
        <path d="M14 1.500q7 2 7 7.500t-6 5q-3-.5-2-3 2-4-2-7z" fill="#6fdc6a" />
        <path d="M8 8q-3 5 1 9t9 1q-3 3.500-8 3T3 14q0-4 5-6z" fill="#0d4f9d" />
      </>
    ),
  },
  {
    name: 'Chrome',
    art: (
      <>
        <circle cx="11" cy="11" r="10" fill="#2fa350" />
        <path d="M11 11L2 6.500A10 10 0 0 1 20.500 7z" fill="#e04236" />
        <path d="M11 11l9.500-4A10 10 0 0 1 10 21z" fill="#f9cb2f" />
        <circle cx="11" cy="11" r="4.800" fill="#fff" />
        <circle cx="11" cy="11" r="3.700" fill="#3f7fe8" />
        <circle cx="16.500" cy="5.500" r="5" fill="#6a4aa8" />
        <path d="M16.500 4v4" stroke="#c9b4ee" />
      </>
    ),
  },
  {
    name: 'YouTube',
    art: (
      <>
        <rect x="1" y="4" width="20" height="14" rx="2.500" fill="#e60b12" />
        <path d="M9 8l5.500 3L9 14z" fill="#fff" />
      </>
    ),
  },
  {
    name: 'Packet tool',
    running: true,
    art: (
      <>
        <path d="M17 9q-7-3-11 1t-1 8q4 4 9 1t2-6q-3-3-6 0-1 3 2 3" fill="none" stroke="#2f8fb3" strokeWidth="3" />
        <path d="M5 14q1-4 6-5" fill="none" stroke="#7cc8dc" strokeWidth="1.200" />
        <circle cx="13" cy="5.500" r="4.500" fill="#6f74c4" />
        <circle cx="13.500" cy="5.500" r="2" fill="#fff" />
        <circle cx="14" cy="5.500" r="1" fill="#15202c" />
      </>
    ),
  },
  {
    name: 'Teams',
    running: true,
    art: (
      <>
        <circle cx="18" cy="7" r="2.500" fill="#5157b5" />
        <circle cx="13" cy="4.500" r="3.500" fill="#7079d8" />
        <path d="M9 9h12v6q-1 5-6 5.500T9 17z" fill="#6870d2" />
        <rect x="1" y="6" width="11" height="11" rx="1" fill="#474ca8" />
        <path d="M4 9h5M6.500 9v5.500" stroke="#fff" strokeWidth="1.500" />
      </>
    ),
  },
  {
    name: 'VMware',
    running: true,
    art: (
      <>
        <rect x="5.500" y="3.500" width="14" height="13" rx="1.500" fill="none" stroke="#7cc2d4" strokeWidth="3" />
        <rect x="2.500" y="6.500" width="13" height="12" rx="1.500" fill="none" stroke="#e9a93b" strokeWidth="3" />
        <rect x="5" y="9" width="8" height="7" fill="#217f86" />
      </>
    ),
  },
  {
    name: 'PowerPoint',
    running: true,
    art: (
      <>
        <path d="M1 2l16-1 4 1-1 13-3 5-14-2z" fill="#f6e6e0" />
        <path d="M1 2l16-1 4 1-15 2.500L4.500 18 3 17.500z" fill="#cf5a3d" />
        <path d="M7 6.500l11-1.500-1 11.500-9.500.5z" fill="#d76a4e" />
        <path d="M9 8.500l7-.8-.6 6.800-6 .3z" fill="#f8ece8" />
        <path d="M10.500 13.500v-3.500l2 1.700M13.500 13V9.500l2 .3" fill="none" stroke="#c84e32" strokeWidth="1.300" />
      </>
    ),
  },
  {
    name: 'Terminal',
    running: true,
    art: (
      <>
        <rect x="1" y="4" width="20" height="15" rx="1" fill="#2e3236" stroke="#53585c" />
        <path d="M1 4h20v3H1z" fill="#6f757a" />
        <path d="M4 10l3.500 2.500L4 15M10 15.500h6" fill="none" stroke="#eee" strokeWidth="1.500" />
      </>
    ),
  },
  {
    name: 'Chrome profile',
    running: true,
    art: (
      <>
        <circle cx="10" cy="12" r="9" fill="#2fa350" />
        <path d="M10 12L2 8a9 9 0 0 1 16 0z" fill="#e04236" />
        <path d="M10 12l8.500-3A9 9 0 0 1 9 21z" fill="#f9cb2f" />
        <circle cx="10" cy="12" r="4.300" fill="#fff" />
        <circle cx="10" cy="12" r="3.200" fill="#3f7fe8" />
        <circle cx="16.500" cy="5" r="4.800" fill="#b9aaa2" />
        <circle cx="16.500" cy="4" r="2" fill="#6a4b3e" />
      </>
    ),
  },
  {
    name: 'Notepad',
    running: true,
    art: (
      <>
        <rect x="3" y="3" width="16" height="18" rx="1" fill="#4cb9dd" />
        <path d="M3 19h16v2H3z" fill="#e8e4d8" />
        <path d="M6 8h10M6 11h10M6 14h10" stroke="#175a75" strokeWidth="1.300" />
        <path d="M5 3h12" stroke="#174d63" strokeWidth="2" strokeDasharray="1 1" />
      </>
    ),
  },
  {
    name: 'OBS',
    running: true,
    art: (
      <>
        <circle cx="10" cy="12" r="8.800" fill="#17171b" stroke="#c9c9cc" strokeWidth="1.300" />
        <g fill="none" stroke="#d5d5d8" strokeWidth="1.600">
          <path d="M10 12q-5-1-4-6M10 12q4 3 2 7M10 12q1-5 6-4" />
        </g>
        <circle cx="17" cy="4.500" r="4.700" fill="#e8110f" />
      </>
    ),
  },
  {
    name: 'Remote client',
    running: true,
    art: (
      <>
        <rect x="1" y="2" width="17" height="13" fill="#d8e3ec" stroke="#7fa2c0" />
        <path d="M3 5h12v7H3z" fill="#6da0d4" />
        <rect x="8.500" y="9" width="12" height="10" fill="#2d2f22" stroke="#b6b9a6" />
        <path d="M11 12l6 1-5 3 6 1" fill="none" stroke="#d3d84b" strokeWidth="1.500" />
      </>
    ),
  },
];

function Taskbar() {
  return (
    <footer className="flex h-10 shrink-0 items-center bg-[#252416] text-[10px] leading-[13px] text-[#f3f3f1]">
      <div className="flex w-[173px] items-center gap-[6px] pl-4">
        <svg viewBox="0 0 21 14" className="h-[14px] w-[21px]" aria-hidden>
          <path d="M5 13.500a4.500 4.500 0 0 1 0-9A6 6 0 0 1 16 5a4.300 4.300 0 0 1 0 8.500z" fill="#b3c6f1" />
          <path d="M5 13.500a4.500 4.500 0 0 1-4-3q8 2 19-2a4.300 4.300 0 0 1-4 5z" fill="#8ea5de" />
        </svg>
        <div>
          <div>29°C</div>
          <div className="text-[#c3c3b9]">Cloudy</div>
        </div>
      </div>
      <button aria-label="Start">
        <svg viewBox="0 0 20 20" className="size-5" aria-hidden>
          <path d="M0 0h9.500v9.500H0zM10.500 0H20v9.500h-9.500zM0 10.500h9.500V20H0zM10.500 10.500H20V20h-9.500z" fill="#42bdf0" />
        </svg>
      </button>
      <label className="ml-3 flex h-[25px] w-[182px] items-center rounded-full bg-[#f5f5f3] pl-[9px] pr-1">
        <Search className="size-[13px] text-[#2b2b28]" strokeWidth={2.4} />
        <input placeholder="Search" className="ml-2 w-0 flex-1 bg-transparent text-[11px] outline-none placeholder:text-[#62625f]" />
        <BingMark className="size-[18px]" />
      </label>
      <div className="ml-[2px] flex h-full w-[622px]">
        {APPS.map((app) => (
          <button
            key={app.name}
            aria-label={app.name}
            className="flex flex-1 flex-col items-center justify-center"
          >
            <span className={cn('flex flex-col items-center gap-1 rounded px-[5px] pb-px pt-[5px]', app.active && 'bg-[#38372a]')}>
              <svg viewBox="0 0 22 22" className="size-[21px]" aria-hidden>
                {app.art}
              </svg>
              <span
                className={cn(
                  'h-[2px] w-[5px] rounded-full',
                  app.running && 'bg-[#9b9a92]',
                  app.active && 'w-3 bg-[#74c8ef]'
                )}
              />
            </span>
          </button>
        ))}
      </div>
      <div className="ml-auto flex items-center pr-4">
        <ChevronUp className="size-[13px]" />
        <Cast className="ml-[14px] size-[14px]" />
        <Mic className="ml-[13px] size-[14px] text-[#7fc6d6]" />
        <div className="ml-[14px] text-center">
          <div>ENG</div>
          <div>US</div>
        </div>
        <Wifi className="ml-[14px] size-[14px]" />
        <Volume2 className="ml-[6px] size-[14px]" />
        <svg viewBox="0 0 14 12" className="ml-[6px] h-3 w-[14px]" aria-hidden>
          <rect x="1" y="3.500" width="11" height="7" rx="1.500" fill="#e9e9e6" stroke="#f3f3f1" />
          <path d="M13.300 5.500v3" stroke="#f3f3f1" strokeWidth="1.300" />
          <path d="M4 0L1.500 5H4L3 9l3.500-5H4z" fill="#fff" stroke="#252416" strokeWidth=".7" />
        </svg>
        <div className="ml-[13px] text-right">
          <div>11:01</div>
          <div>24-08-2023</div>
        </div>
      </div>
    </footer>
  );
}

export default function App() {
  return (
    <div className={cn('flex h-screen min-h-[600px] flex-col overflow-hidden', UI)}>
      <BrowserTitle />
      <div className="flex min-h-0 flex-1">
        <div className="flex min-w-0 flex-1 flex-col bg-[#6bdfd3]">
          <Toolbar />
          <Favorites />
          <div className="relative flex min-h-0 flex-1 flex-col bg-[#8ca8b4]">
            <AppHeader />
            <div className={cn('flex h-[29px] shrink-0 items-center justify-end gap-[8px] pr-[7px] text-[9px] text-[#e4ecef]', NARROW)}>
              <button aria-label="Refresh">
                <svg viewBox="0 0 12 10" className="h-[10px] w-3" fill="none" stroke="#eef4f6" strokeWidth="2" aria-hidden>
                  <path d="M1 4q1-3 5-3h4v2M11 6q-1 3-5 3H2V7" />
                </svg>
              </button>
              <a href="#" className="flex items-center gap-[2px]">
                <HelpBadge />
                Help
              </a>
            </div>
            <div className="flex min-h-0 flex-1 pl-[9px]">
              <TreePanel />
              <MainPane />
            </div>
            <AppFooter />
            <div className="absolute inset-0 flex items-start justify-center pt-[99px]">
              <ProfileDialog />
            </div>
          </div>
        </div>
        <EdgeSidebar />
      </div>
      <Taskbar />
    </div>
  );
}
